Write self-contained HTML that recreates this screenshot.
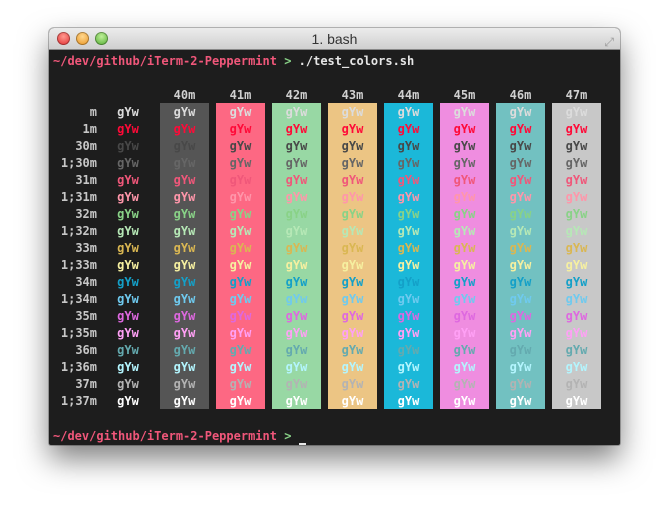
<!DOCTYPE html>
<html><head><style>
*{margin:0;padding:0;box-sizing:border-box}
body{width:669px;height:516px;background:#fff;position:relative;overflow:hidden;font-family:"DejaVu Sans Mono","Liberation Mono",monospace}
.win{position:absolute;left:49px;top:28px;width:571px;height:417px;border-radius:5px 5px 2px 2px;box-shadow:0 14px 30px rgba(0,0,0,.5),0 0 0 1px rgba(0,0,0,.25);overflow:hidden;background:#1d1d1d}
.tb{position:absolute;left:0;top:0;width:100%;height:22px;background:linear-gradient(#ececec,#cfcfcf);border-bottom:1px solid #888;font-family:"Liberation Sans",sans-serif;font-size:14px;color:#333;text-align:center;line-height:22px}
.dot{position:absolute;top:4px;width:13px;height:13px;border-radius:50%;box-shadow:inset 0 0 0 1px rgba(0,0,0,.3)}
.blk{position:absolute;top:103px;height:306px;width:49px}
.t{position:absolute;font-size:12px;font-weight:bold;line-height:17px;white-space:pre}
.r{position:absolute;left:37px;height:17px;display:flex;font-size:12px;font-weight:bold;line-height:17px}
.r span{display:block;text-align:center}
.r .l{width:60px;text-align:right;color:#c7c7c7;margin-right:9px}
.r .d{width:44px;margin-right:10px}
.r .b{width:49px;margin-right:7px}
</style></head><body>
<div class="win">
<div class="tb">1. bash
<div class="dot" style="left:8px;background:radial-gradient(circle at 50% 35%,#ff9a90,#e0252a)"></div>
<div class="dot" style="left:27px;background:radial-gradient(circle at 50% 35%,#ffd890,#e8901a)"></div>
<div class="dot" style="left:46px;background:radial-gradient(circle at 50% 35%,#c0f09a,#4aa82a)"></div>
<div style="position:absolute;right:6px;top:3px;color:#999;font-size:12px">⤢</div>
</div>
</div>
<div class="blk" style="left:160px;background:#555"></div>
<div class="blk" style="left:216px;background:#fd6883"></div>
<div class="blk" style="left:272px;background:#98d8a4"></div>
<div class="blk" style="left:328px;background:#ecc584"></div>
<div class="blk" style="left:384px;background:#1bb8d9"></div>
<div class="blk" style="left:440px;background:#ef8de0"></div>
<div class="blk" style="left:496px;background:#72c1c1"></div>
<div class="blk" style="left:552px;background:#c8c8c8"></div>
<div class="t" style="left:53px;top:53px;color:#f0577a">~/dev/github/iTerm-2-Peppermint <span style="color:#89d287">&gt;</span> <span style="color:#e6e6e6">./test_colors.sh</span></div>
<div class="t" style="left:53px;top:428px;color:#f0577a">~/dev/github/iTerm-2-Peppermint <span style="color:#89d287">&gt;</span> <span style="color:#e6e6e6;border-bottom:2px solid #e6e6e6">&nbsp;</span></div>
<div class="r" style="top:87px;color:#d0d0d0"><span class="l"></span><span class="d"></span><span class="b">40m</span><span class="b">41m</span><span class="b">42m</span><span class="b">43m</span><span class="b">44m</span><span class="b">45m</span><span class="b">46m</span><span class="b">47m</span></div>
<div class="r" style="top:104px;color:#dcdcdc"><span class="l">m</span><span class="d">gYw</span><span class="b">gYw</span><span class="b">gYw</span><span class="b">gYw</span><span class="b">gYw</span><span class="b">gYw</span><span class="b">gYw</span><span class="b">gYw</span><span class="b">gYw</span></div>
<div class="r" style="top:121px;color:#ff0a38"><span class="l">1m</span><span class="d">gYw</span><span class="b">gYw</span><span class="b">gYw</span><span class="b">gYw</span><span class="b">gYw</span><span class="b">gYw</span><span class="b">gYw</span><span class="b">gYw</span><span class="b">gYw</span></div>
<div class="r" style="top:138px;color:#484848"><span class="l">30m</span><span class="d">gYw</span><span class="b">gYw</span><span class="b">gYw</span><span class="b">gYw</span><span class="b">gYw</span><span class="b">gYw</span><span class="b">gYw</span><span class="b">gYw</span><span class="b">gYw</span></div>
<div class="r" style="top:155px;color:#666"><span class="l">1;30m</span><span class="d">gYw</span><span class="b">gYw</span><span class="b">gYw</span><span class="b">gYw</span><span class="b">gYw</span><span class="b">gYw</span><span class="b">gYw</span><span class="b">gYw</span><span class="b">gYw</span></div>
<div class="r" style="top:172px;color:#f0577a"><span class="l">31m</span><span class="d">gYw</span><span class="b">gYw</span><span class="b">gYw</span><span class="b">gYw</span><span class="b">gYw</span><span class="b">gYw</span><span class="b">gYw</span><span class="b">gYw</span><span class="b">gYw</span></div>
<div class="r" style="top:189px;color:#ff96aa"><span class="l">1;31m</span><span class="d">gYw</span><span class="b">gYw</span><span class="b">gYw</span><span class="b">gYw</span><span class="b">gYw</span><span class="b">gYw</span><span class="b">gYw</span><span class="b">gYw</span><span class="b">gYw</span></div>
<div class="r" style="top:206px;color:#89d287"><span class="l">32m</span><span class="d">gYw</span><span class="b">gYw</span><span class="b">gYw</span><span class="b">gYw</span><span class="b">gYw</span><span class="b">gYw</span><span class="b">gYw</span><span class="b">gYw</span><span class="b">gYw</span></div>
<div class="r" style="top:223px;color:#b6e8b6"><span class="l">1;32m</span><span class="d">gYw</span><span class="b">gYw</span><span class="b">gYw</span><span class="b">gYw</span><span class="b">gYw</span><span class="b">gYw</span><span class="b">gYw</span><span class="b">gYw</span><span class="b">gYw</span></div>
<div class="r" style="top:240px;color:#dab752"><span class="l">33m</span><span class="d">gYw</span><span class="b">gYw</span><span class="b">gYw</span><span class="b">gYw</span><span class="b">gYw</span><span class="b">gYw</span><span class="b">gYw</span><span class="b">gYw</span><span class="b">gYw</span></div>
<div class="r" style="top:257px;color:#f6f0a0"><span class="l">1;33m</span><span class="d">gYw</span><span class="b">gYw</span><span class="b">gYw</span><span class="b">gYw</span><span class="b">gYw</span><span class="b">gYw</span><span class="b">gYw</span><span class="b">gYw</span><span class="b">gYw</span></div>
<div class="r" style="top:274px;color:#14a0c8"><span class="l">34m</span><span class="d">gYw</span><span class="b">gYw</span><span class="b">gYw</span><span class="b">gYw</span><span class="b">gYw</span><span class="b">gYw</span><span class="b">gYw</span><span class="b">gYw</span><span class="b">gYw</span></div>
<div class="r" style="top:291px;color:#6fcaef"><span class="l">1;34m</span><span class="d">gYw</span><span class="b">gYw</span><span class="b">gYw</span><span class="b">gYw</span><span class="b">gYw</span><span class="b">gYw</span><span class="b">gYw</span><span class="b">gYw</span><span class="b">gYw</span></div>
<div class="r" style="top:308px;color:#de68e0"><span class="l">35m</span><span class="d">gYw</span><span class="b">gYw</span><span class="b">gYw</span><span class="b">gYw</span><span class="b">gYw</span><span class="b">gYw</span><span class="b">gYw</span><span class="b">gYw</span><span class="b">gYw</span></div>
<div class="r" style="top:325px;color:#ffa0f5"><span class="l">1;35m</span><span class="d">gYw</span><span class="b">gYw</span><span class="b">gYw</span><span class="b">gYw</span><span class="b">gYw</span><span class="b">gYw</span><span class="b">gYw</span><span class="b">gYw</span><span class="b">gYw</span></div>
<div class="r" style="top:342px;color:#64aaaf"><span class="l">36m</span><span class="d">gYw</span><span class="b">gYw</span><span class="b">gYw</span><span class="b">gYw</span><span class="b">gYw</span><span class="b">gYw</span><span class="b">gYw</span><span class="b">gYw</span><span class="b">gYw</span></div>
<div class="r" style="top:359px;color:#b3f5fe"><span class="l">1;36m</span><span class="d">gYw</span><span class="b">gYw</span><span class="b">gYw</span><span class="b">gYw</span><span class="b">gYw</span><span class="b">gYw</span><span class="b">gYw</span><span class="b">gYw</span><span class="b">gYw</span></div>
<div class="r" style="top:376px;color:#b3b3b3"><span class="l">37m</span><span class="d">gYw</span><span class="b">gYw</span><span class="b">gYw</span><span class="b">gYw</span><span class="b">gYw</span><span class="b">gYw</span><span class="b">gYw</span><span class="b">gYw</span><span class="b">gYw</span></div>
<div class="r" style="top:393px;color:#ffffff"><span class="l">1;37m</span><span class="d">gYw</span><span class="b">gYw</span><span class="b">gYw</span><span class="b">gYw</span><span class="b">gYw</span><span class="b">gYw</span><span class="b">gYw</span><span class="b">gYw</span><span class="b">gYw</span></div>
</body></html>
